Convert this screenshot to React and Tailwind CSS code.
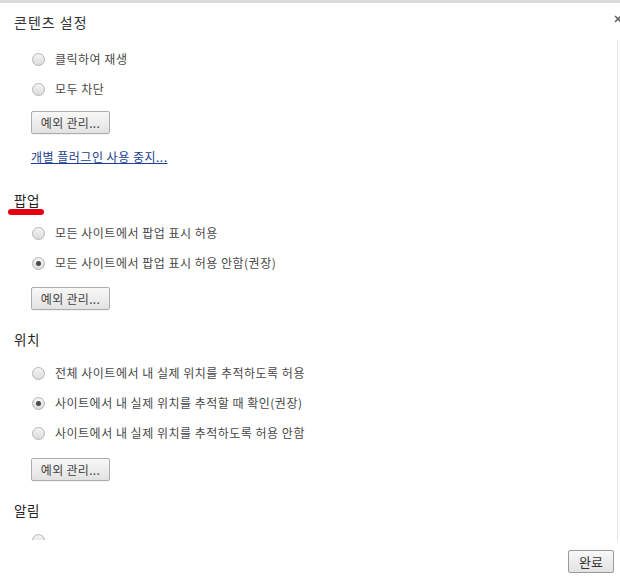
import React from "react";

const FONT = { fontFamily: '"Noto Sans CJK KR", "Noto Sans", sans-serif' };

function Radio({ checked }) {
  return (
    <span className="w-[13px] h-[13px] rounded-full border border-[#b4b4b4] bg-gradient-to-b from-[#f4f4f4] to-[#dcdcdc] flex items-center justify-center shrink-0">
      {checked && <span className="w-[5px] h-[5px] rounded-full bg-[#4a4a4a]" />}
    </span>
  );
}

function Option({ label, checked }) {
  return (
    <div className="h-[30px] flex items-center pl-[32px] gap-[10px] text-[12px] tracking-[0.5px] text-[#484848]">
      <Radio checked={checked} />
      <span>{label}</span>
    </div>
  );
}

function ExceptionButton({ className = "" }) {
  return (
    <div className={"flex pl-[31px] " + className}>
      <button className="h-[23px] w-[79px] border border-[#acacac] rounded-[2px] bg-gradient-to-b from-[#f8f8f8] to-[#e2e2e2] text-[12px] tracking-[0.3px] text-[#444] shadow-[0_1px_0_rgba(0,0,0,0.05)]">
        예외 관리...
      </button>
    </div>
  );
}

function Heading({ children, className = "", mark }) {
  return (
    <div className={"relative h-[20px] flex items-center pl-[14px] text-[13.5px] tracking-[0.5px] text-[#222] " + className}>
      {children}
      {mark && (
        <span className="absolute left-[8px] top-[19px] w-[36px] h-[6px] rounded-full bg-[#e80010] blur-[0.6px]" />
      )}
    </div>
  );
}

export default function App() {
  return (
    <div className="w-[620px] h-[578px] bg-white flex flex-col overflow-hidden" style={FONT}>
      <div className="h-[3px] bg-[#dcdcdc] shrink-0" />
      <div className="h-[37px] shrink-0 flex justify-between pt-[9px]">
        <div className="h-[20px] flex items-center pl-[14px] text-[14px] tracking-[1px] text-[#333]">콘텐츠 설정</div>
        <svg width="8" height="8" viewBox="0 0 8 8" className="mt-[3px] mr-[-2px]">
          <path d="M1 1 L7 7 M7 1 L1 7" stroke="#666" strokeWidth="1.6" />
        </svg>
      </div>

      <div className="h-[500px] shrink-0 overflow-hidden mr-[2px] border-r border-[#e2e2e2] pt-[4px]">
        <Option label="클릭하여 재생" />
        <Option label="모두 차단" />
        <ExceptionButton className="mt-[7px]" />
        <div className="h-[20px] flex items-center pl-[31px] mt-[13px] text-[12px] tracking-[0.5px] text-[#1a3f8f] underline">
          개별 플러그인 사용 중지...
        </div>

        <Heading className="mt-[23px]" mark>팝업</Heading>
        <div className="mt-[8px]">
          <Option label="모든 사이트에서 팝업 표시 허용" />
          <Option label="모든 사이트에서 팝업 표시 허용 안함(권장)" checked />
        </div>
        <ExceptionButton className="mt-[9px]" />

        <Heading className="mt-[19px]">위치</Heading>
        <div className="mt-[9px]">
          <Option label="전체 사이트에서 내 실제 위치를 추적하도록 허용" />
          <Option label="사이트에서 내 실제 위치를 추적할 때 확인(권장)" checked />
          <Option label="사이트에서 내 실제 위치를 추적하도록 허용 안함" />
        </div>
        <ExceptionButton className="mt-[10px]" />

        <Heading className="mt-[19px]">알림</Heading>
        <div className="mt-[5px]">
          <Option label="" />
        </div>
      </div>

      <div className="flex-1 flex justify-end items-start pt-[10px] pr-[6px]">
        <button className="h-[23px] w-[46px] border border-[#9a9a9a] rounded-[2px] bg-gradient-to-b from-[#f8f8f8] to-[#e2e2e2] text-[13px] text-[#333]">
          완료
        </button>
      </div>
    </div>
  );
}
